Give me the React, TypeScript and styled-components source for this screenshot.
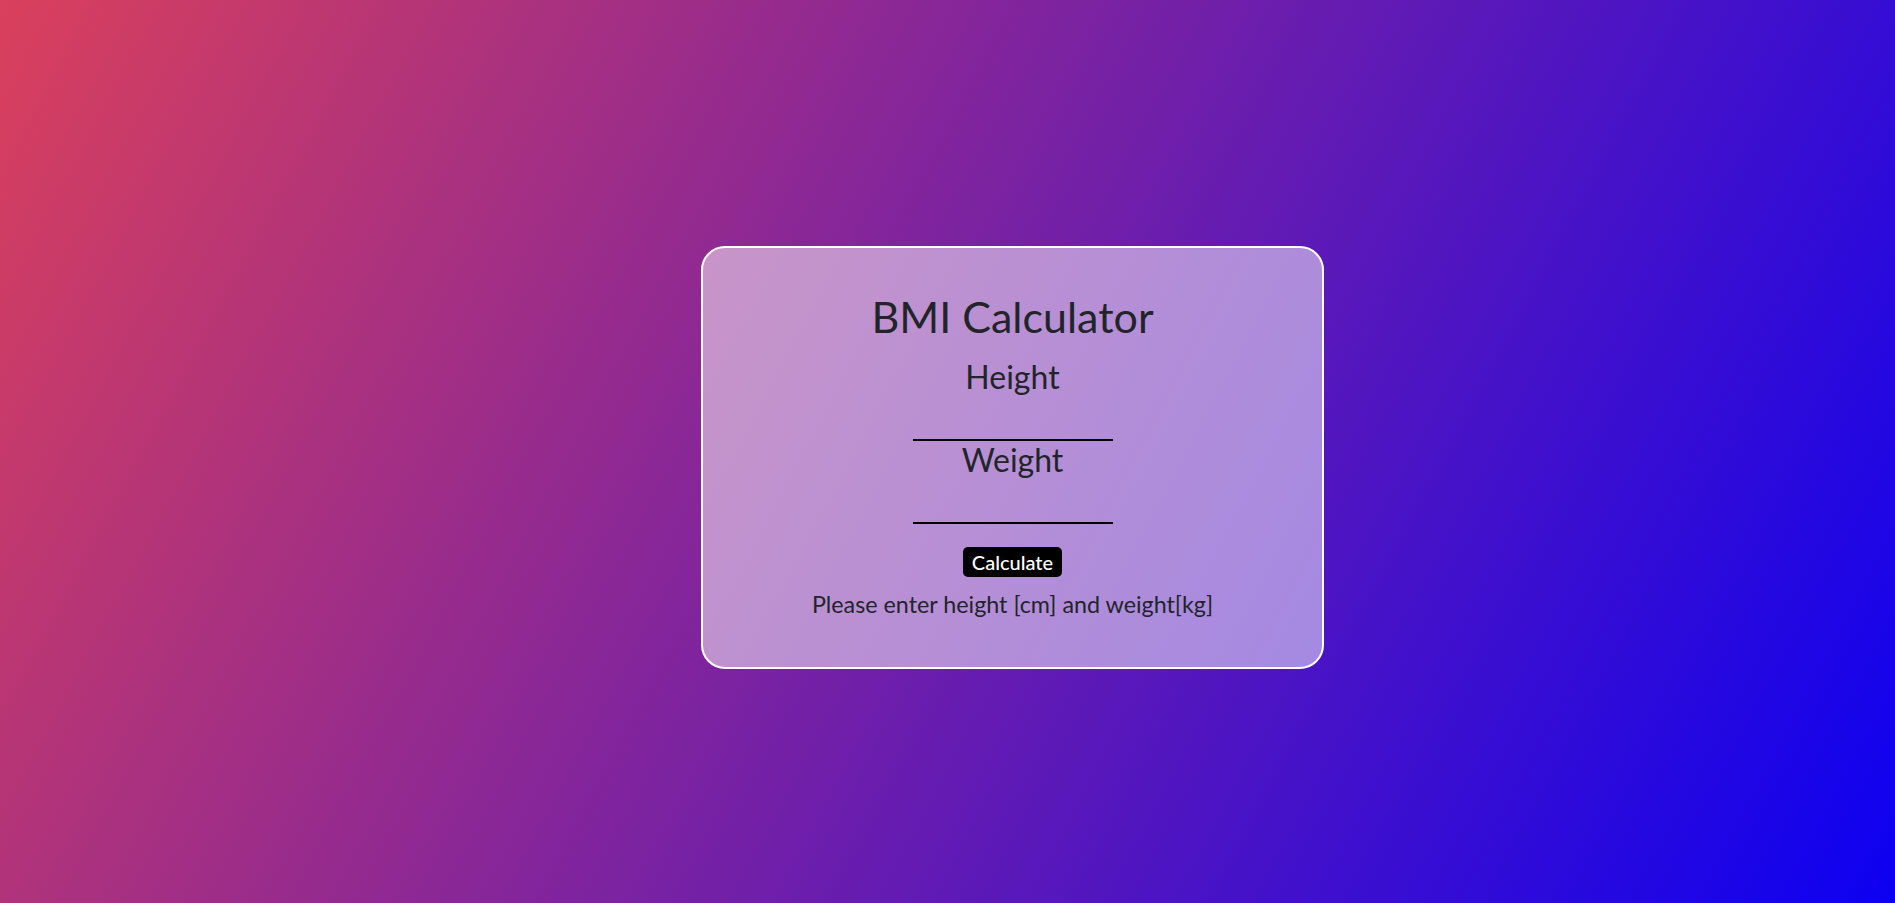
import React, { useState } from "react";
import styled, { createGlobalStyle } from "styled-components";

const GlobalStyle = createGlobalStyle`
  * {
    box-sizing: border-box;
  }
  body {
    margin: 0;
    font-family: "Lato", "Open Sans", sans-serif;
    color: #212529;
  }
`;

const Page = styled.div`
  min-height: 100vh;
  display: flex;
  justify-content: center;
  align-items: center;
  padding: 12px 0 0 130px;
  background: linear-gradient(118deg, #da405c, #0c00f2);
`;

const Card = styled.div`
  width: 623px;
  display: flex;
  flex-direction: column;
  align-items: center;
  padding: 43px 20px 49px;
  background-color: rgba(255, 255, 255, 0.5);
  border: 2px solid #ffffff;
  border-radius: 24px;
`;

const Title = styled.h1`
  margin: 0 0 15px;
  font-size: 43px;
  font-weight: 400;
  line-height: 1.2;
`;

const Label = styled.h2`
  margin: 0 0 5px;
  font-size: 32px;
  font-weight: 400;
  line-height: 1.2;
`;

const Field = styled.input`
  width: 200px;
  height: 40px;
  margin: 0;
  padding: 0 4px;
  border: none;
  border-bottom: 2px solid #000000;
  background: transparent;
  font-family: inherit;
  font-size: 24px;
  text-align: center;
  color: #212529;
  outline: none;
`;

const CalcButton = styled.button`
  margin: 22.6px 0 13px;
  height: 30px;
  padding: 0 9px;
  border: none;
  border-radius: 5px;
  background-color: #000000;
  color: #ffffff;
  font-family: inherit;
  font-size: 20px;
  font-weight: 500;
  line-height: 1;
  cursor: pointer;
`;

const Message = styled.h4`
  margin: 0;
  font-size: 23.3px;
  font-weight: 400;
  line-height: 28px;
`;

const App = () => {
  const [height, setHeight] = useState("");
  const [weight, setWeight] = useState("");
  const [message, setMessage] = useState("Please enter height [cm] and weight[kg]");

  const calculate = () => {
    const h = parseFloat(height) / 100;
    const w = parseFloat(weight);
    if (!h || !w) {
      setMessage("Please enter height [cm] and weight[kg]");
      return;
    }
    setMessage(`Your BMI is ${(w / (h * h)).toFixed(1)}`);
  };

  return (
    <Page>
      <GlobalStyle />
      <Card>
        <Title>BMI Calculator</Title>
        <Label>Height</Label>
        <Field value={height} onChange={(e) => setHeight(e.target.value)} />
        <Label>Weight</Label>
        <Field value={weight} onChange={(e) => setWeight(e.target.value)} />
        <CalcButton onClick={calculate}>Calculate</CalcButton>
        <Message>{message}</Message>
      </Card>
    </Page>
  );
};

export default App;
